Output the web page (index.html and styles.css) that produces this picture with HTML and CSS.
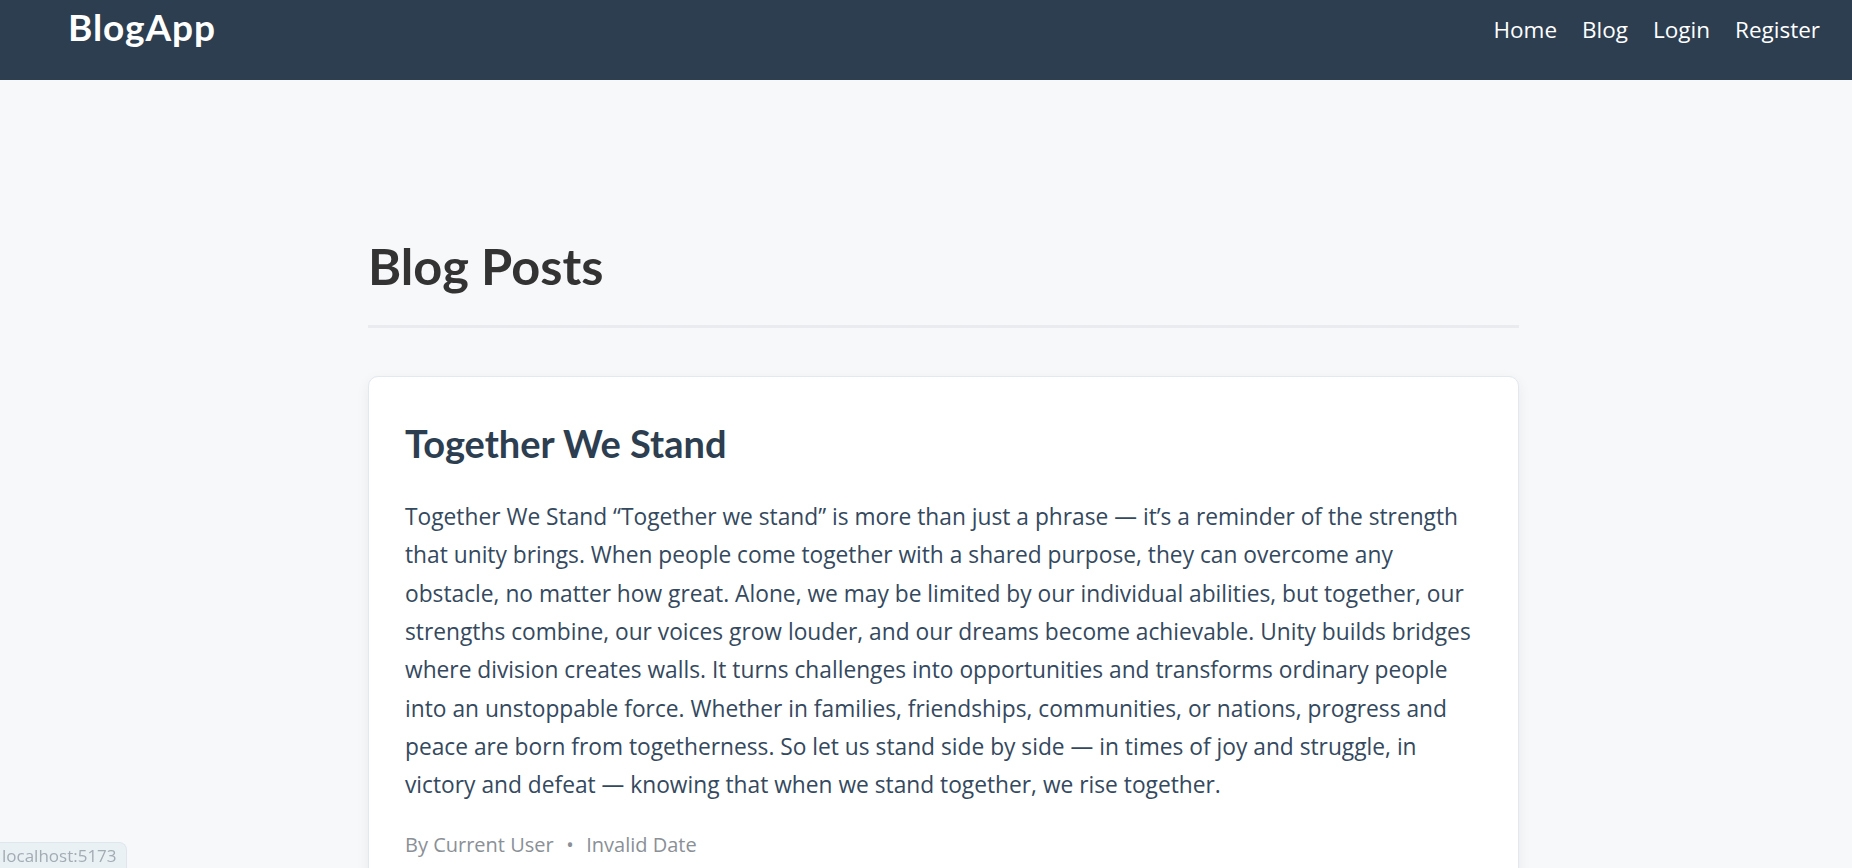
FILE: index.html
```html
<!DOCTYPE html>
<html lang="en">
<head>
<meta charset="utf-8">
<title>BlogApp</title>
<link rel="stylesheet" href="styles.css">
</head>
<body>
<header class="navbar">
  <a class="brand" href="#">BlogApp</a>
  <nav class="nav-links">
    <a href="#">Home</a>
    <a href="#">Blog</a>
    <a href="#">Login</a>
    <a href="#">Register</a>
  </nav>
</header>
<main class="main">
  <h1 class="page-title">Blog Posts</h1>
  <article class="post-card">
    <h2 class="post-title">Together We Stand</h2>
    <p class="post-body">Together We Stand “Together we stand” is more than just a phrase — it’s a reminder of the strength that unity brings. When people come together with a shared purpose, they can overcome any obstacle, no matter how great. Alone, we may be limited by our individual abilities, but together, our strengths combine, our voices grow louder, and our dreams become achievable. Unity builds bridges where division creates walls. It turns challenges into opportunities and transforms ordinary people into an unstoppable force. Whether in families, friendships, communities, or nations, progress and peace are born from togetherness. So let us stand side by side — in times of joy and struggle, in victory and defeat — knowing that when we stand together, we rise together.</p>
    <div class="post-meta"><span>By Current User</span><span class="dot">•</span><span>Invalid Date</span></div>
  </article>
</main>
<div class="status-bubble">localhost:5173</div>
</body>
</html>
```

FILE: styles.css
```css
* { box-sizing: border-box; }
html, body { margin: 0; padding: 0; }
body {
  background: #f7f8fa;
  font-family: "Open Sans", "Noto Sans", sans-serif;
  color: #2c3e50;
  overflow: hidden;
  height: 868px;
}
a { text-decoration: none; color: inherit; }

.navbar {
  height: 80px;
  background: #2c3e50;
  display: flex;
  justify-content: space-between;
  align-items: flex-start;
  padding: 0 32px 0 68px;
}
.brand {
  color: #ffffff;
  font-family: "Lato", "Open Sans", sans-serif;
  font-weight: 700;
  font-size: 37px;
  letter-spacing: 0.9px;
  line-height: 1.2;
  padding-top: 5px;
}
.nav-links {
  display: flex;
  gap: 25px;
  padding-top: 16px;
}
.nav-links a {
  color: #ffffff;
  font-size: 22.5px;
  line-height: 1.2;
}

.main {
  margin-left: 368px;
  width: 1151px;
  padding-top: 156px;
}
.page-title {
  margin: 0;
  font-family: "Lato", "Open Sans", sans-serif;
  font-size: 50.5px;
  line-height: 1.2;
  font-weight: 700;
  color: #333333;
  padding-bottom: 28px;
  border-bottom: 3px solid #e9ebee;
  margin-bottom: 48px;
}
.post-card {
  background: #ffffff;
  border: 1px solid #e3e8ee;
  border-radius: 10px;
  box-shadow: 0 4px 14px rgba(0, 0, 0, 0.06);
  padding: 44px 36px 40px 36px;
}
.post-title {
  margin: 0 0 32px 0;
  font-family: "Lato", "Open Sans", sans-serif;
  font-size: 38px;
  line-height: 1.2;
  font-weight: 700;
  color: #2c3e50;
}
.post-body {
  margin: 0 0 25px 0;
  font-size: 22.75px;
  line-height: 38.3px;
  color: #34495e;
}
.post-meta {
  display: flex;
  gap: 12.5px;
  font-size: 20px;
  line-height: 30px;
  color: #8a9096;
}

.status-bubble {
  position: fixed;
  left: 0;
  bottom: 0;
  height: 26px;
  padding: 0 9px 0 2px;
  background: #e9f1f5;
  border: 1px solid #dfe7ec;
  border-left: none;
  border-bottom: none;
  border-top-right-radius: 8px;
  color: #a3acb3;
  font-size: 17px;
  line-height: 25px;
}
```
